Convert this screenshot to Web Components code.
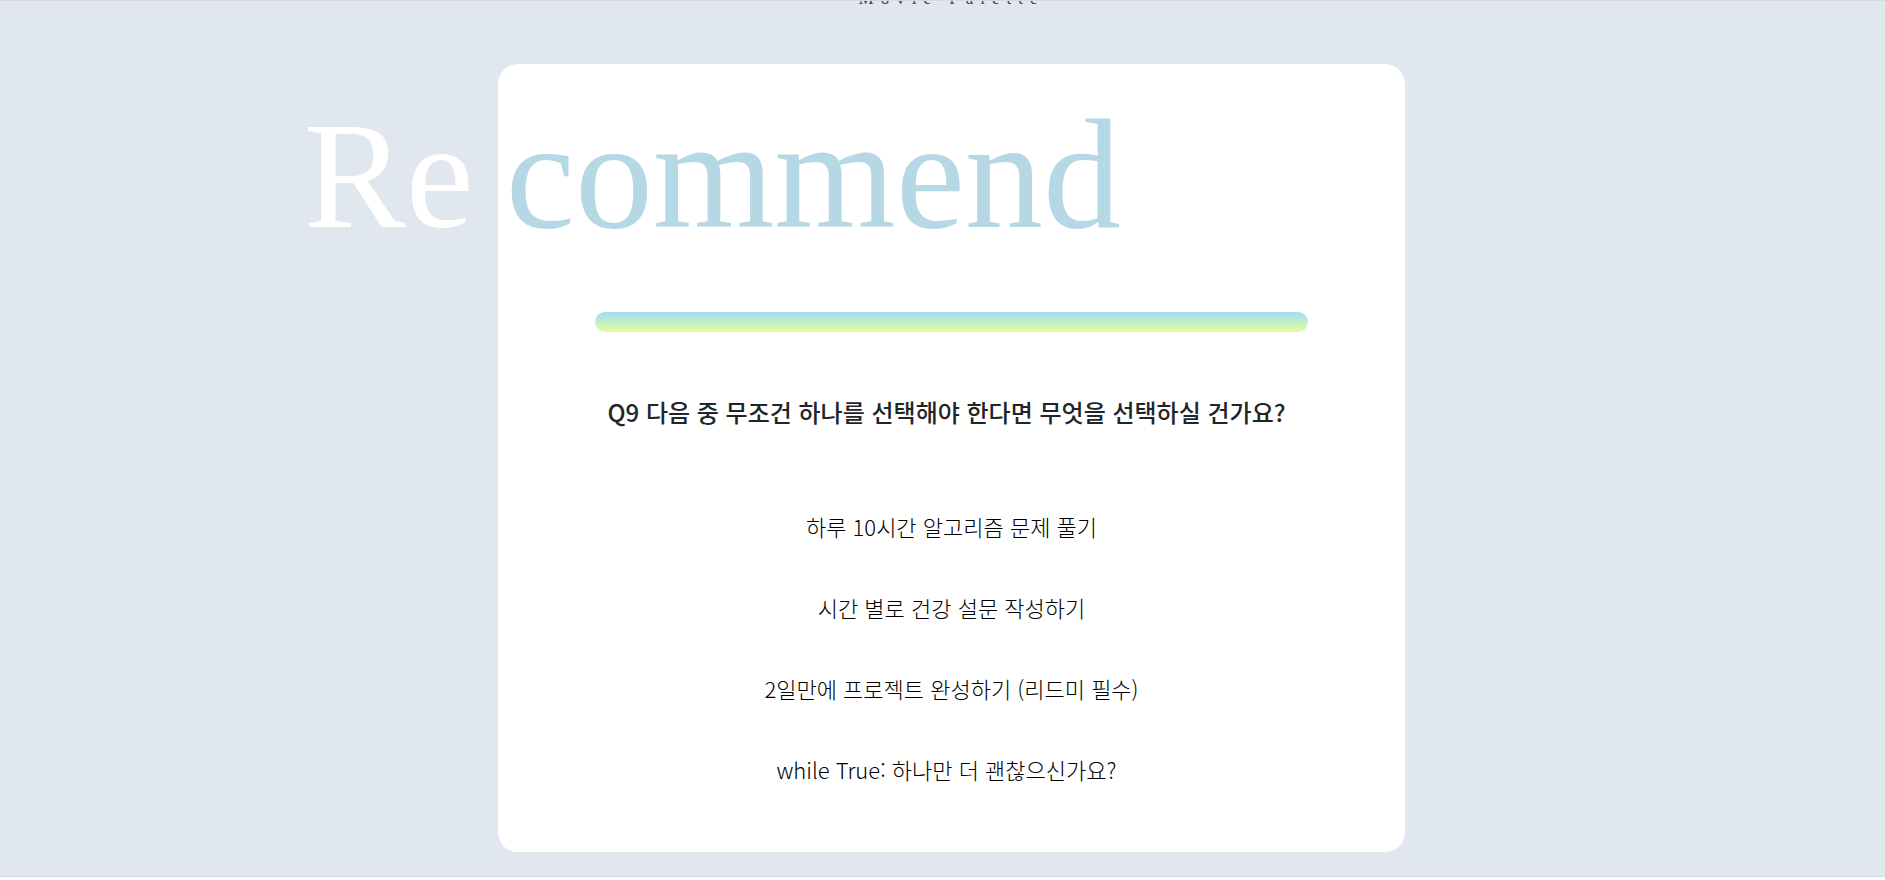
<!DOCTYPE html>
<html lang="ko">
<head>
<meta charset="utf-8">
<meta name="viewport" content="width=device-width, initial-scale=1">
<title>Movie Palette</title>
<style>
  body {
    margin: 0;
    background: #fff;
    color: #212529;
    font-family: "Liberation Serif", "Noto Sans CJK KR", serif;
  }
</style>
</head>
<body>
<movie-page>
  <page-header slot="header">Movie Palette</page-header>
  <survey-card>
    <split-title slot="title"><span slot="outer">Re</span><span slot="inner">commend</span></split-title>
    <progress-line slot="progress"></progress-line>
    <survey-question slot="question">Q9 다음 중 무조건 하나를 선택해야 한다면 무엇을 선택하실 건가요?</survey-question>
    <survey-option>하루 10시간 알고리즘 문제 풀기</survey-option>
    <survey-option>시간 별로 건강 설문 작성하기</survey-option>
    <survey-option>2일만에 프로젝트 완성하기 (리드미 필수)</survey-option>
    <survey-option trailing>while True: 하나만 더 괜찮으신가요?</survey-option>
  </survey-card>
</movie-page>

<script>
  const define = (name, html) => {
    const template = document.createElement('template');
    template.innerHTML = html;
    customElements.define(name, class extends HTMLElement {
      constructor() {
        super();
        this.attachShadow({ mode: 'open' }).append(template.content.cloneNode(true));
      }
    });
  };

  define('movie-page', `
    <style>
      :host {
        display: block;
        background: #e0e7ef;
        border-top: 1px solid #d7dbe1;
        border-bottom: 1px solid #d7dbe1;
      }
      main {
        display: flex;
        flex-direction: column;
        align-items: center;
        padding: 60px 0 24px 18px;
      }
    </style>
    <slot name="header"></slot>
    <main><slot></slot></main>
  `);

  /* Header scrolled almost out of view: only the foot of its text shows. */
  define('page-header', `
    <style>
      :host {
        display: flex;
        align-items: flex-end;
        justify-content: center;
        height: 3px;
        overflow: hidden;
        padding-left: 18px;
      }
      header {
        color: #444;
        font-size: 17px;
        line-height: 11px;
        letter-spacing: 7px;
      }
    </style>
    <header><slot></slot></header>
  `);

  define('survey-card', `
    <style>
      :host {
        display: block;
        box-sizing: border-box;
        width: 48.6%;
        padding: 30px 97px 66px;
        border-radius: 20px;
        background: #fff;
      }
      .options {
        display: flex;
        flex-direction: column;
        align-items: center;
        gap: 48px;
        margin-top: 82px;
      }
    </style>
    <slot name="title"></slot>
    <slot name="progress"></slot>
    <slot name="question"></slot>
    <div class="options"><slot></slot></div>
  `);

  /* The first syllable hangs out of the card to its left. */
  define('split-title', `
    <style>
      :host { display: block; margin-left: -291px; }
      h1 {
        display: flex;
        align-items: baseline;
        gap: 32px;
        margin: 0;
        line-height: 162px;
        font-weight: 400;
        white-space: nowrap;
      }
      .outer { color: #fff; font-size: 153px; }
      .inner { color: #b6d8e4; font-size: 156px; }
    </style>
    <h1><span class="outer"><slot name="outer"></slot></span><span class="inner"><slot name="inner"></slot></span></h1>
  `);

  define('progress-line', `
    <style>
      :host {
        display: block;
        height: 20px;
        margin-top: 55px;
        border-radius: 10px;
        background: linear-gradient(#a1dcf8, #e4ff96);
      }
    </style>
  `);

  define('survey-question', `
    <style>
      :host { display: block; margin-top: 64px; }
      h2 {
        margin: 0;
        padding-right: 10px;
        font: 500 24px/32px "Noto Sans CJK KR", sans-serif;
        text-align: center;
        white-space: nowrap;
      }
    </style>
    <h2><slot></slot></h2>
  `);

  define('survey-option', `
    <style>
      :host { display: block; }
      :host([trailing]) { padding-right: 10px; }
      button {
        padding: 0;
        border: 0;
        background: none;
        color: #000;
        font-family: "Noto Sans CJK KR", sans-serif;
        font-size: 22px;
        font-weight: 300;
        line-height: 33px;
        white-space: nowrap;
        cursor: pointer;
      }
    </style>
    <button type="button"><slot></slot></button>
  `);
</script>
</body>
</html>
